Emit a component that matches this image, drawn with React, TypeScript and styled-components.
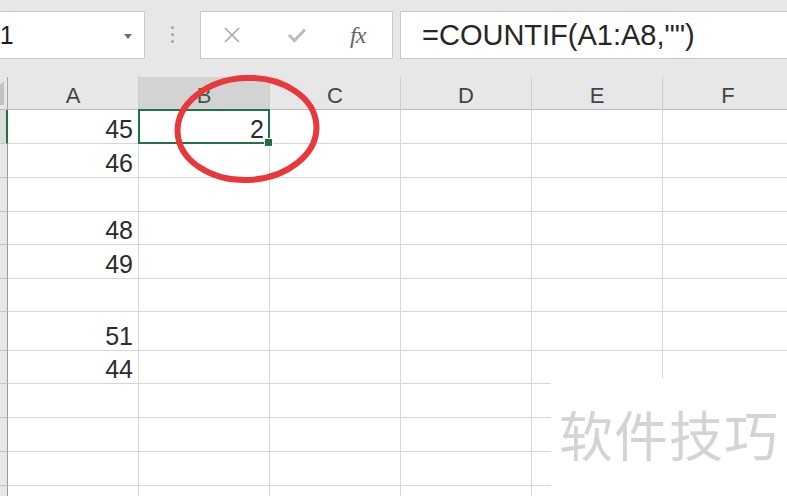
import React from "react";
import styled, { createGlobalStyle } from "styled-components";

const GlobalStyle = createGlobalStyle`
  html, body {
    margin: 0;
    padding: 0;
    background: #e7e7e7;
    font-family: "Liberation Sans", Arial, sans-serif;
  }
`;

const COLS = ["A", "B", "C", "D", "E", "F"];
const ROW_HEIGHTS = [34, 34, 34, 33, 34, 33, 39, 33, 34, 34, 34, 34];
const VALUES: Record<number, string> = {
  0: "45",
  1: "46",
  3: "48",
  4: "49",
  6: "51",
  7: "44",
};

const Screen = styled.div`
  position: relative;
  width: 787px;
  height: 496px;
  overflow: hidden;
  background: #e7e7e7;
`;

const Toolbar = styled.div`
  display: flex;
  align-items: flex-start;
  height: 77px;
  padding-top: 11px;
  box-sizing: border-box;
`;

const Field = styled.div<{ $width?: number }>`
  display: flex;
  align-items: center;
  box-sizing: border-box;
  height: 48px;
  background: #ffffff;
  border: 1px solid #c9c9c9;
  ${(p) => (p.$width ? `width: ${p.$width}px; flex: none;` : "flex: 1;")}
`;

const NameBox = styled(Field)`
  border-left: none;
  justify-content: space-between;
  padding-right: 12px;
`;

const NameText = styled.span`
  margin-left: -17px;
  font-size: 25px;
  color: #1d1d1d;
`;

const DropArrow = styled.span`
  width: 0;
  height: 0;
  border-left: 4px solid transparent;
  border-right: 4px solid transparent;
  border-top: 5px solid #6d6d6d;
  margin-top: 2px;
`;

const Grip = styled.div`
  display: flex;
  flex-direction: column;
  gap: 4px;
  width: 55px;
  align-items: center;
  padding-top: 15px;
  flex: none;

  span {
    width: 3px;
    height: 3px;
    border-radius: 50%;
    background: #a3a3a3;
  }
`;

const FxBox = styled(Field)`
  gap: 46px;
  padding-left: 22px;
  margin-right: 7px;
`;

const FxLabel = styled.span`
  font-family: "Liberation Serif", "Times New Roman", serif;
  font-style: italic;
  font-size: 24px;
  color: #666666;
  letter-spacing: -1px;
  margin-left: -3px;
`;

const FormulaBox = styled(Field)`
  border-right: none;
  padding-left: 21px;
  font-size: 29px;
  color: #262626;
`;

const Sheet = styled.div`
  display: grid;
  grid-template-columns: 8px repeat(6, 131px);
  grid-template-rows: 33px ${ROW_HEIGHTS.map((h) => `${h}px`).join(" ")};
  background: #ffffff;
`;

const Corner = styled.div`
  background: #e7e7e7;
  border-bottom: 1px solid #bdbdbd;
  border-right: 1px solid #a6a6a6;
  box-sizing: border-box;
  display: flex;
  align-items: flex-end;
  padding-bottom: 4px;
`;

const ColHead = styled.div<{ $active?: boolean }>`
  box-sizing: border-box;
  display: flex;
  align-items: center;
  justify-content: center;
  padding-top: 5px;
  font-size: 22px;
  background: ${(p) => (p.$active ? "#d3d3d3" : "#e7e7e7")};
  color: ${(p) => (p.$active ? "#3a5a45" : "#444444")};
  border-right: 1px solid #cdcdcd;
  border-bottom: 1px solid #bdbdbd;
`;

const RowHead = styled.div<{ $active?: boolean }>`
  box-sizing: border-box;
  background: ${(p) => (p.$active ? "#dcdcdc" : "#e7e7e7")};
  border-right: ${(p) => (p.$active ? "2px solid #217346" : "1px solid #9a9a9a")};
  border-bottom: 1px solid #c4c4c4;
`;

const Cell = styled.div`
  position: relative;
  box-sizing: border-box;
  display: flex;
  align-items: flex-end;
  justify-content: flex-end;
  padding: 0 5px 1px 0;
  border-right: 1px solid #d6d6d6;
  border-bottom: 1px solid #d6d6d6;
  font-size: 25px;
  line-height: 25px;
  color: #2b2b2b;
`;

const Selection = styled.div`
  position: absolute;
  z-index: 2;
  inset: -1px -1px -1px -1px;
  border: 2px solid #217346;
  pointer-events: none;
`;

const FillHandle = styled.div`
  position: absolute;
  z-index: 3;
  right: -4px;
  bottom: -4px;
  width: 7px;
  height: 7px;
  background: #217346;
  border: 1px solid #ffffff;
`;

const Annotation = styled.svg`
  position: absolute;
  z-index: 5;
  left: 0;
  top: 0;
  pointer-events: none;
`;

const Watermark = styled.div`
  position: absolute;
  z-index: 6;
  left: 551px;
  top: 378px;
  right: 0;
  bottom: 0;
  background: #ffffff;
  padding: 20px 0 0 8px;
  font-family: "Noto Sans CJK SC", "Noto Sans", sans-serif;
  font-size: 54px;
  line-height: 72px;
  color: #d4d4d4;
  letter-spacing: 1px;
`;

export default function App() {
  return (
    <Screen>
      <GlobalStyle />
      <Toolbar>
        <NameBox $width={145}>
          <NameText>B1</NameText>
          <DropArrow />
        </NameBox>
        <Grip>
          <span />
          <span />
          <span />
        </Grip>
        <FxBox $width={193}>
          <svg width="18" height="18" viewBox="0 0 18 18">
            <path d="M2 2 L16 16 M16 2 L2 16" stroke="#a9a9a9" strokeWidth="1.6" fill="none" />
          </svg>
          <svg width="20" height="16" viewBox="0 0 20 16">
            <path d="M2 8 L7.5 13.5 L18 2.5" stroke="#bcbcbc" strokeWidth="3" fill="none" />
          </svg>
          <FxLabel>fx</FxLabel>
        </FxBox>
        <FormulaBox>=COUNTIF(A1:A8,"")</FormulaBox>
      </Toolbar>

      <Sheet>
        <Corner>
          <svg width="4" height="24" viewBox="0 0 4 24">
            <polygon points="0,24 4,24 4,0 0,4" fill="#c3c3c3" />
          </svg>
        </Corner>
        {COLS.map((c) => (
          <ColHead key={c} $active={c === "B"}>
            {c}
          </ColHead>
        ))}
        {ROW_HEIGHTS.map((_, r) => (
          <React.Fragment key={r}>
            <RowHead $active={r === 0} />
            {COLS.map((c) => (
              <Cell key={c}>
                {c === "A" ? VALUES[r] ?? "" : ""}
                {c === "B" && r === 0 && (
                  <>
                    2
                    <Selection />
                    <FillHandle />
                  </>
                )}
              </Cell>
            ))}
          </React.Fragment>
        ))}
      </Sheet>

      <Annotation width="787" height="496">
        <ellipse
          cx="247"
          cy="129"
          rx="69.5"
          ry="51"
          fill="none"
          stroke="#e8383c"
          strokeWidth="6"
          transform="rotate(-3 247 129)"
        />
      </Annotation>

      <Watermark>软件技巧</Watermark>
    </Screen>
  );
}
